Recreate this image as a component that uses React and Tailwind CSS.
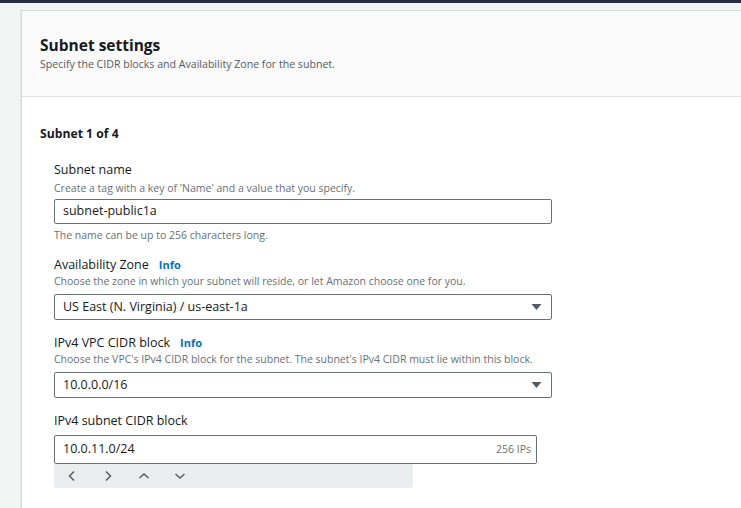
import React from "react";

function Caret() {
  return (
    <svg width="11" height="8" viewBox="0 0 11 8" className="shrink-0">
      <path d="M0.5 1 L10.5 1 L5.5 7 Z" fill="#545b64" />
    </svg>
  );
}

function Info() {
  return <span className="ml-[10px] text-[11px] font-bold text-[#0073bb]">Info</span>;
}

export default function App() {
  return (
    <div
      className="w-[741px] h-[508px] overflow-hidden bg-[#f2f3f3] flex flex-col"
      style={{ fontFamily: '"Open Sans", "Noto Sans", sans-serif' }}
    >
      <div className="h-[3px] bg-[#232f3e] shrink-0" />
      <div className="flex-1 pl-[21px] pt-[7px]">
        <div className="h-full bg-white border-l border-t border-[#d5dbdb] shadow-[0_1px_1px_0_rgba(0,28,36,0.3)] flex flex-col">
          <div className="bg-[#fafafa] border-b border-[#e1e4e4] h-[86px] pl-[18px] pt-[24px]">
            <div className="text-[15.5px] leading-[20px] font-bold text-[#16191f]">Subnet settings</div>
            <div className="text-[10.6px] leading-[14px] text-[#545b64] mt-[2px]">
              Specify the CIDR blocks and Availability Zone for the subnet.
            </div>
          </div>
          <div className="pl-[18px] pt-[29px]">
            <div className="text-[12.2px] leading-[16px] font-bold text-[#16191f]">Subnet 1 of 4</div>
            <div className="pl-[14px] pt-[20px] w-[513px]">
              <div className="text-[12.5px] leading-[16px] text-[#16191f]">Subnet name</div>
              <div className="text-[10.5px] leading-[14px] text-[#687078] mt-[3px]">
                Create a tag with a key of 'Name' and a value that you specify.
              </div>
              <div className="mt-[4px] h-[25px] w-[498px] border border-[#687078] rounded-[2px] bg-white flex items-center px-[8px] text-[12.5px] text-[#16191f]">
                subnet-public1a
              </div>
              <div className="text-[10.5px] leading-[14px] text-[#687078] mt-[4px]">
                The name can be up to 256 characters long.
              </div>

              <div className="mt-[15px] text-[12.5px] leading-[16px] text-[#16191f] flex items-baseline">
                Availability Zone<Info />
              </div>
              <div className="text-[10.5px] leading-[14px] text-[#687078] mt-[1px]">
                Choose the zone in which your subnet will reside, or let Amazon choose one for you.
              </div>
              <div className="mt-[6px] h-[26px] w-[498px] border border-[#687078] rounded-[2px] bg-white flex items-center justify-between pl-[8px] pr-[9px] text-[12.5px] text-[#16191f]">
                <span>US East (N. Virginia) / us-east-1a</span>
                <Caret />
              </div>

              <div className="mt-[15px] text-[12.5px] leading-[16px] text-[#16191f] flex items-baseline">
                IPv4 VPC CIDR block<Info />
              </div>
              <div className="text-[10.5px] leading-[14px] text-[#687078] mt-[1px]">
                Choose the VPC's IPv4 CIDR block for the subnet. The subnet's IPv4 CIDR must lie within this block.
              </div>
              <div className="mt-[6px] h-[26px] w-[498px] border border-[#687078] rounded-[2px] bg-white flex items-center justify-between pl-[8px] pr-[9px] text-[12.5px] text-[#16191f]">
                <span>10.0.0.0/16</span>
                <Caret />
              </div>

              <div className="mt-[15px] text-[12.5px] leading-[16px] text-[#16191f]">IPv4 subnet CIDR block</div>
              <div className="mt-[6px] relative">
                <div className="h-[29px] w-[483px] border border-[#687078] rounded-[2px] bg-white flex items-center justify-between pl-[8px] pr-[5px] text-[12.5px] text-[#16191f] relative z-10">
                  <span>10.0.11.0/24</span>
                  <span className="text-[10.5px] text-[#687078]">256 IPs</span>
                </div>
                <div className="h-[24px] w-[359px] bg-[#eaeded] rounded-b-[3px] flex items-center pl-[10px] gap-[20px] text-[#545b64]">
                  <svg width="16" height="16" viewBox="0 0 16 16"><path d="M10 3.5 L5.5 8 L10 12.5" fill="none" stroke="#545b64" strokeWidth="1.5" /></svg>
                  <svg width="16" height="16" viewBox="0 0 16 16"><path d="M6 3.5 L10.5 8 L6 12.5" fill="none" stroke="#545b64" strokeWidth="1.5" /></svg>
                  <svg width="16" height="16" viewBox="0 0 16 16"><path d="M3.5 10 L8 6 L12.5 10" fill="none" stroke="#545b64" strokeWidth="1.5" /></svg>
                  <svg width="16" height="16" viewBox="0 0 16 16"><path d="M3.5 6 L8 10 L12.5 6" fill="none" stroke="#545b64" strokeWidth="1.5" /></svg>
                </div>
              </div>
            </div>
          </div>
        </div>
      </div>
    </div>
  );
}
